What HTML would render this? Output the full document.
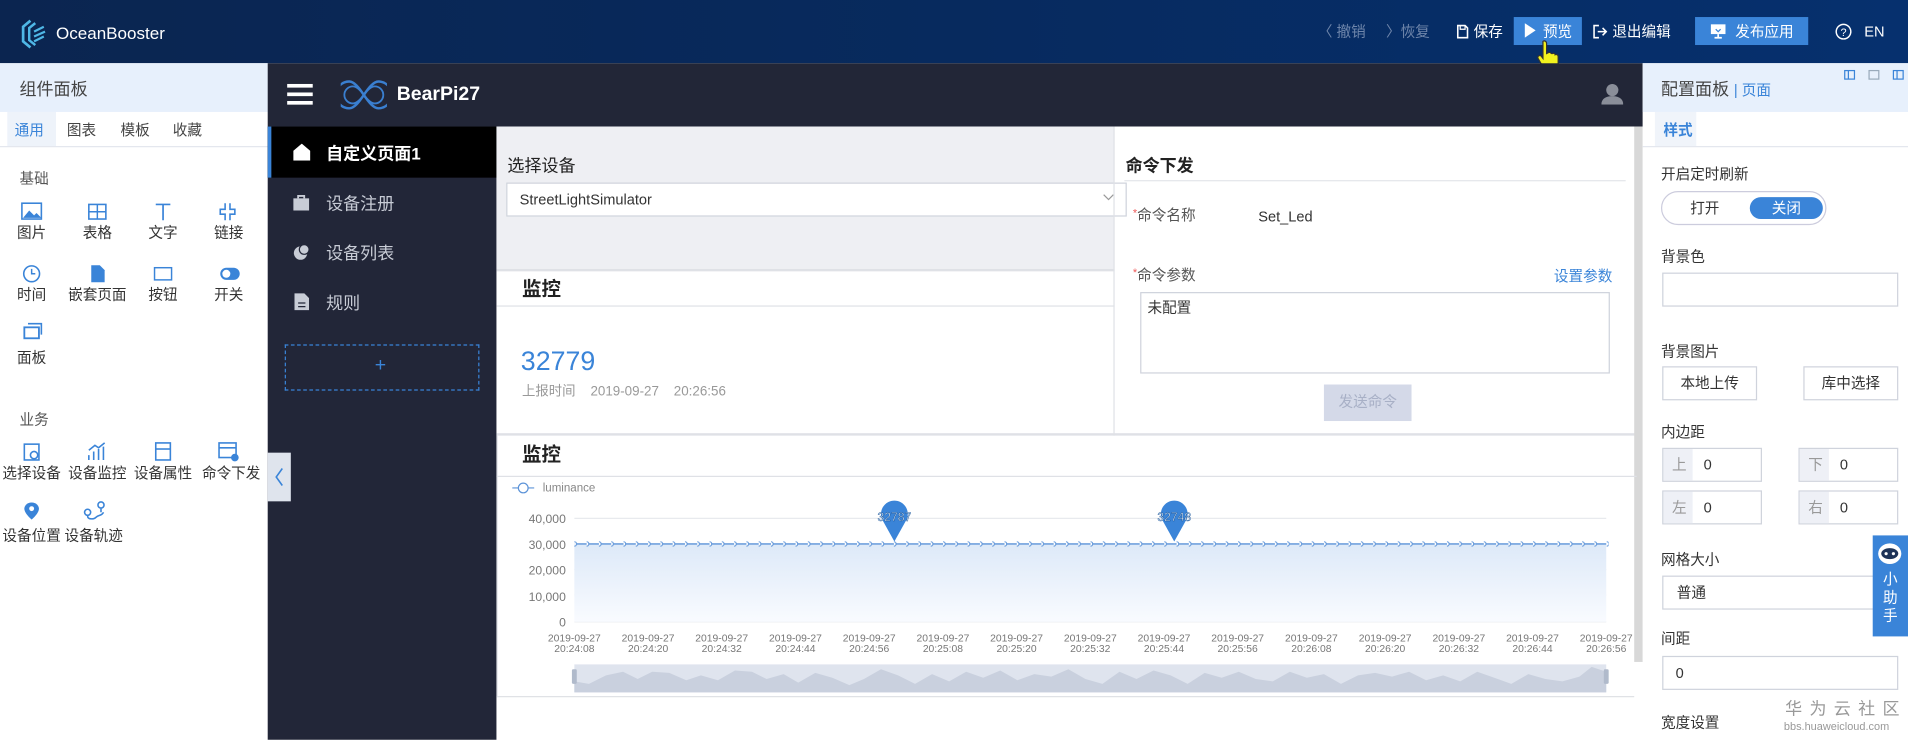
<!DOCTYPE html>
<html><head><meta charset="utf-8">
<style>
*{box-sizing:border-box;margin:0;padding:0}
html,body{width:1908px;height:740px;overflow:hidden;background:#fff}
body{font-family:"Liberation Sans","Noto Sans CJK SC",sans-serif;font-size:12px;color:#333}
#s{position:absolute;left:0;top:0;width:1568px;height:608px;transform:scale(1.21684);transform-origin:0 0;overflow:hidden}
.a{position:absolute}
.t{position:absolute;white-space:nowrap;line-height:1}
.top{left:0;top:0;width:1568px;height:52px;background:linear-gradient(90deg,#0b2550,#072a5e 50%,#06306e)}
.tw{color:#fff}
.lp{left:0;top:52px;width:220px;height:556px;background:#fff}
.ph{background:#e7f0fc;height:40px;width:100%;position:absolute;top:0;left:0}
.lab{position:absolute;font-size:12px;color:#333;text-align:center;width:60px;margin-left:-30px;line-height:1}
.nav{left:220px;top:52px;width:188px;height:556px;background:#222638}
.nt{color:#c8ccd6;font-size:14px}
.inp{position:absolute;background:#fff;border:1px solid #cfd3dc}
.rp{left:1350px;top:52px;width:218px;height:556px;background:#fff}
.rl{color:#333;font-size:12px}
</style></head><body><div id="s">

<div class="a top"></div>
<svg class="a" style="left:16px;top:15px" width="24" height="26" viewBox="0 0 24 26"><path d="M9 2 L3 7 L3 19 L9 24" fill="none" stroke="#4fb7e6" stroke-width="2.2"/><path d="M13 4 L8 8 L8 18 L13 22" fill="none" stroke="#4fb7e6" stroke-width="2"/><path d="M12 11 L20 7 M12 15 L21 11 M12 19 L20 15" stroke="#4fb7e6" stroke-width="1.8"/></svg>
<div class="t tw" style="left:46px;top:20px;font-size:14px">OceanBooster</div>
<div class="t" style="left:1083px;top:20px;color:#6f86ab;font-size:12px">〈 撤销</div>
<div class="t" style="left:1139px;top:20px;color:#6f86ab;font-size:12px">〉恢复</div>
<svg class="a" style="left:1197px;top:20px" width="10" height="12"><path d="M1 1h6l2 2v8H1z" fill="none" stroke="#fff" stroke-width="1.3"/><path d="M3 1v3h4V1" stroke="#fff" fill="none"/></svg>
<div class="t tw" style="left:1211px;top:20px">保存</div>
<div class="a" style="left:1244px;top:14px;width:56px;height:23px;background:#3a84d8"></div>
<svg class="a" style="left:1253px;top:19px" width="9" height="12"><path d="M0 0L9 6 0 12z" fill="#fff"/></svg>
<div class="t tw" style="left:1268px;top:20px">预览</div>
<svg class="a" style="left:1262px;top:32px" width="26" height="28" viewBox="0 0 26 28"><path d="M6 2c1.5-1 3 0 3 2v8l2-1c1 0 2 1 2 1l1 0c1-.5 2 0 2 1 1-.5 2.5 0 2.5 1.5V20c0 3-2 6-5 6H10c-2 0-3-1-4-3L2 16c-1-1.5 1-3 2.5-2L6 16V3z" fill="#f2f21e" stroke="#333" stroke-width="1"/></svg>
<svg class="a" style="left:1309px;top:20px" width="12" height="12"><path d="M5 1H1v10h4" fill="none" stroke="#fff" stroke-width="1.3"/><path d="M4 6h7M8 3l3 3-3 3" fill="none" stroke="#fff" stroke-width="1.3"/></svg>
<div class="t tw" style="left:1325px;top:20px">退出编辑</div>
<div class="a" style="left:1393px;top:14px;width:93px;height:23px;background:#3a84d8"></div>
<svg class="a" style="left:1405px;top:19px" width="14" height="13"><rect x="1" y="1" width="12" height="8" fill="#fff"/><path d="M7 9v3M4 12h6" stroke="#fff" stroke-width="1.4"/><path d="M5 5l2 2 2-2" stroke="#3a84d8" fill="none"/></svg>
<div class="t tw" style="left:1426px;top:20px">发布应用</div>
<svg class="a" style="left:1508px;top:19px" width="14" height="14"><circle cx="7" cy="7" r="6" fill="none" stroke="#fff" stroke-width="1.2"/><text x="7" y="10.5" font-size="9" fill="#fff" text-anchor="middle" font-family="Liberation Sans">?</text></svg>
<div class="t tw" style="left:1532px;top:20px">EN</div>

<div class="a lp">
 <div class="ph"></div>
 <div class="t" style="left:16px;top:14px;font-size:14px;color:#444">组件面板</div>
 <div class="a" style="left:6px;top:40px;width:40px;height:28px;background:#eef3fa"></div>
 <div class="t" style="left:12px;top:49px;color:#3a84d8">通用</div>
 <div class="t" style="left:55px;top:49px;color:#444">图表</div>
 <div class="t" style="left:99px;top:49px;color:#444">模板</div>
 <div class="t" style="left:142px;top:49px;color:#444">收藏</div>
 <div class="a" style="left:0;top:68px;width:220px;height:1px;background:#e4e7ee"></div>
 <div class="t" style="left:16px;top:89px;color:#555">基础</div>
 <svg class="a" style="left:0;top:0" width="220" height="400">
  <g fill="#3a84d8" stroke="#3a84d8">
   <rect x="18" y="115" width="16" height="13" fill="none" stroke-width="1.3"/><path d="M19 127l5-6 4 4 2-2 4 4z" stroke="none"/>
   <rect x="73" y="116" width="14" height="12" fill="none" stroke-width="1.3"/><path d="M73 122h14M80 116v12" stroke-width="1.2"/>
   <path d="M128 116h12M134 116v13" stroke-width="1.4" fill="none"/>
   <path d="M185 115v5h-4v4h4v5M189 115v5h4v4h-4v5" fill="none" stroke-width="1.3"/>
   <circle cx="26" cy="173" r="6.5" fill="none" stroke-width="1.3"/><path d="M26 169v4h3" fill="none" stroke-width="1.2"/>
   <path d="M75 166h7l4 4v10H75z" stroke="none"/>
   <rect x="127" y="168" width="14" height="10" fill="none" stroke-width="1.2"/>
   <rect x="181" y="168" width="16" height="10" rx="5" stroke="none"/><circle cx="186" cy="173" r="3.3" fill="#fff" stroke="none"/>
   <rect x="20" y="217" width="12" height="9" fill="none" stroke-width="1.5"/><path d="M23 214h11v9" fill="none" stroke-width="1.3"/>
  </g>
 </svg>
 <div class="lab" style="left:26px;top:133px">图片</div>
 <div class="lab" style="left:80px;top:133px">表格</div>
 <div class="lab" style="left:134px;top:133px">文字</div>
 <div class="lab" style="left:188px;top:133px">链接</div>
 <div class="lab" style="left:26px;top:184px">时间</div>
 <div class="lab" style="left:80px;top:184px">嵌套页面</div>
 <div class="lab" style="left:134px;top:184px">按钮</div>
 <div class="lab" style="left:188px;top:184px">开关</div>
 <div class="lab" style="left:26px;top:236px">面板</div>
 <div class="t" style="left:16px;top:287px;color:#555">业务</div>
 <svg class="a" style="left:0;top:0" width="220" height="400">
  <g fill="none" stroke="#3a84d8" stroke-width="1.3">
   <rect x="20" y="313" width="12" height="13"/><circle cx="28" cy="322" r="3"/>
   <path d="M73 326v-4M77 326v-7M81 326v-9M85 326v-11M73 318l5-4 3 2 5-4"/>
   <rect x="128" y="312" width="12" height="14"/><path d="M128 317h12"/>
   <rect x="180" y="312" width="14" height="12"/><path d="M180 316h14"/><circle cx="193" cy="324" r="2.5" fill="#3a84d8"/>
  </g>
  <path d="M26 361c-4 0-6 3-6 5 0 4 6 9 6 9s6-5 6-9c0-2-2-5-6-5z" fill="#3a84d8"/><circle cx="26" cy="366" r="2" fill="#fff"/>
  <g fill="none" stroke="#3a84d8" stroke-width="1.3"><circle cx="72" cy="369" r="2.5"/><circle cx="83" cy="363" r="2.5"/><path d="M72 372c0 3 5 3 7 1s5-1 6-4M83 366v3"/></g>
 </svg>
 <div class="lab" style="left:26px;top:331px">选择设备</div>
 <div class="lab" style="left:80px;top:331px">设备监控</div>
 <div class="lab" style="left:134px;top:331px">设备属性</div>
 <div class="lab" style="left:190px;top:331px">命令下发</div>
 <div class="lab" style="left:26px;top:382px">设备位置</div>
 <div class="lab" style="left:77px;top:382px">设备轨迹</div>
</div>

<div class="a" style="left:220px;top:52px;width:1130px;height:52px;background:#222637"></div>
<div class="a" style="left:236px;top:69px;width:21px;height:2.5px;background:#fff"></div>
<div class="a" style="left:236px;top:76px;width:21px;height:2.5px;background:#fff"></div>
<div class="a" style="left:236px;top:83px;width:21px;height:2.5px;background:#fff"></div>
<svg class="a" style="left:280px;top:64px" width="38" height="28" viewBox="0 0 38 28"><g fill="none" stroke="#3a7fd0" stroke-width="2"><path d="M19 14c-4-6-8-11-12-11a11 11 0 0 0 0 22c4 0 8-5 12-11s8-11 12-11a11 11 0 0 1 0 22c-4 0-8-5-12-11z"/><path d="M19 14c-3-4-6-7-9-7a7 7 0 0 0 0 14c3 0 6-3 9-7s6-7 9-7a7 7 0 0 1 0 14c-3 0-6-3-9-7z" stroke-width="1.5"/></g></svg>
<div class="t tw" style="left:326px;top:70px;font-size:16px;font-weight:bold">BearPi27</div>
<svg class="a" style="left:1316px;top:68px" width="18" height="18"><circle cx="9" cy="6" r="5" fill="#8a8e99"/><path d="M0 18c0-5 4-7 9-7s9 2 9 7z" fill="#8a8e99"/></svg>

<div class="a nav" style="top:104px;height:504px"></div>
<div class="a" style="left:220px;top:104px;width:188px;height:42px;background:#000"></div>
<div class="a" style="left:220px;top:104px;width:3px;height:42px;background:#3a84d8"></div>
<svg class="a" style="left:241px;top:118px" width="14" height="14"><path d="M7 0L14 6v8H0V6z" fill="#fff"/></svg>
<div class="t" style="left:268px;top:119px;color:#fff;font-size:14px;font-weight:bold">自定义页面1</div>
<svg class="a" style="left:241px;top:159px" width="14" height="14"><rect x="0" y="4" width="13" height="10" fill="#c8ccd6"/><path d="M4 4V2h5v2" stroke="#c8ccd6" fill="none" stroke-width="1.5"/></svg>
<div class="t nt" style="left:268px;top:160px">设备注册</div>
<svg class="a" style="left:241px;top:200px" width="14" height="14"><circle cx="6" cy="8" r="5.5" fill="#c8ccd6"/><circle cx="9" cy="5" r="4" fill="#c8ccd6" stroke="#222638"/></svg>
<div class="t nt" style="left:268px;top:201px">设备列表</div>
<svg class="a" style="left:242px;top:241px" width="12" height="14"><path d="M0 0h8l4 4v10H0z" fill="#c8ccd6"/><path d="M3 8h6M3 11h6" stroke="#222638"/></svg>
<div class="t nt" style="left:268px;top:242px">规则</div>
<div class="a" style="left:234px;top:283px;width:160px;height:38px;border:1.5px dashed #3a84d8"></div>
<div class="t" style="left:308px;top:293px;color:#3a84d8;font-size:16px">+</div>
<div class="a" style="left:220px;top:372px;width:19px;height:40px;background:#dfe4ed"></div>
<svg class="a" style="left:225px;top:384px" width="9" height="16"><path d="M7 1L2 8l5 7" fill="none" stroke="#3a84d8" stroke-width="1.3"/></svg>

<div class="a" style="left:408px;top:104px;width:942px;height:504px;background:#fff"></div>
<div class="a" style="left:408px;top:104px;width:508px;height:117px;background:#eeeff3"></div>
<div class="t" style="left:417px;top:129px;font-size:14px;color:#222">选择设备</div>
<div class="inp" style="left:416px;top:150px;width:510px;height:28px"></div>
<div class="t" style="left:427px;top:158px;font-size:12px;color:#333">StreetLightSimulator</div>
<svg class="a" style="left:906px;top:159px" width="10" height="7"><path d="M1 1l4 4 4-4" fill="none" stroke="#999"/></svg>
<div class="a" style="left:408px;top:221px;width:508px;height:2px;background:#dfe1e6"></div>
<div class="t" style="left:429px;top:231px;font-size:16px;font-weight:bold;color:#222">监控</div>
<div class="a" style="left:408px;top:251px;width:508px;height:1px;background:#dfe1e6"></div>
<div class="t" style="left:428px;top:286px;font-size:22px;color:#3a84d8">32779</div>
<div class="t" style="left:429px;top:317px;font-size:11px;color:#999">上报时间&nbsp;&nbsp;&nbsp; 2019-09-27 &nbsp;&nbsp;&nbsp;20:26:56</div>
<div class="a" style="left:915px;top:104px;width:1px;height:254px;background:#dfe1e6"></div>
<div class="a" style="left:408px;top:356px;width:937px;height:2px;background:#dfe1e6"></div>
<div class="t" style="left:925px;top:129px;font-size:14px;font-weight:bold;color:#222">命令下发</div>
<div class="a" style="left:924px;top:148px;width:412px;height:1px;background:#e4e6ea"></div>
<div class="t" style="left:931px;top:171px;font-size:12px;color:#555"><span style="color:#e55;font-size:9px;vertical-align:top">*</span>命令名称</div>
<div class="t" style="left:1034px;top:172px;font-size:12px;color:#333">Set_Led</div>
<div class="t" style="left:931px;top:220px;font-size:12px;color:#555"><span style="color:#e55;font-size:9px;vertical-align:top">*</span>命令参数</div>
<div class="t" style="left:1277px;top:221px;font-size:12px;color:#3a84d8">设置参数</div>
<div class="inp" style="left:937px;top:240px;width:386px;height:67px"></div>
<div class="t" style="left:943px;top:247px;font-size:12px;color:#333">未配置</div>
<div class="a" style="left:1088px;top:316px;width:72px;height:30px;background:#d4d9e8"></div>
<div class="t" style="left:1100px;top:324px;font-size:12px;color:#a8b0c6">发送命令</div>
<div class="a" style="left:1343px;top:104px;width:7px;height:440px;background:#d8d8d8"></div>

<div class="t" style="left:429px;top:367px;font-size:16px;font-weight:bold;color:#222">监控</div>
<div class="a" style="left:408px;top:391px;width:937px;height:1px;background:#dfe1e6"></div>
<div class="a" style="left:408px;top:572px;width:937px;height:1px;background:#dfe1e6"></div>
<div class="a" style="left:408px;top:358px;width:1px;height:215px;background:#dfe1e6"></div>
<svg class="a" style="left:408px;top:392px" width="937" height="180" font-family="Liberation Sans" >
 <defs>
  <linearGradient id="g" x1="0" y1="0" x2="0" y2="1"><stop offset="0" stop-color="#dde9f8"/><stop offset="1" stop-color="#f9fbff"/></linearGradient>
  <pattern id="d" x="64" y="0" width="10.1" height="180" patternUnits="userSpaceOnUse"><circle cx="0" cy="55" r="1.8" fill="#fff" stroke="#5c93d8" stroke-width="0.9"/></pattern>
 </defs>
 <path d="M13 9h18" stroke="#5c93d8"/><circle cx="22" cy="9" r="4" fill="#fff" stroke="#5c93d8"/>
 <text x="38" y="12" font-size="9.5" fill="#888">luminance</text>
 <g fill="#777" font-size="10" text-anchor="end">
  <text x="57" y="38">40,000</text><text x="57" y="59">30,000</text><text x="57" y="80">20,000</text><text x="57" y="102">10,000</text><text x="57" y="123">0</text>
 </g>
 <g stroke="#e8eaee"><path d="M64 34h848M64 76h848M64 97h848M64 119h848"/></g>
 <rect x="64" y="55" width="848" height="64" fill="url(#g)"/>
 <path d="M64 55h848" stroke="#5c93d8" stroke-width="1.2"/>
 <rect x="62" y="50" width="852" height="10" fill="url(#d)"/>
 <g fill="#3a84d8"><path d="M327 53l-10-18a11 11 0 1 1 20 0z"/><path d="M557 53l-10-18a11 11 0 1 1 20 0z"/></g>
 <g fill="#fff" font-size="10" text-anchor="middle" stroke="#1e5a9e" stroke-width="0.4"><text x="327" y="36">32787</text><text x="557" y="36">32748</text></g>
 <g fill="#777" font-size="8.5" text-anchor="middle">
  <text x="64" y="135">2019-09-27</text><text x="64" y="144">20:24:08</text>
  <text x="124.6" y="135">2019-09-27</text><text x="124.6" y="144">20:24:20</text>
  <text x="185.1" y="135">2019-09-27</text><text x="185.1" y="144">20:24:32</text>
  <text x="245.7" y="135">2019-09-27</text><text x="245.7" y="144">20:24:44</text>
  <text x="306.3" y="135">2019-09-27</text><text x="306.3" y="144">20:24:56</text>
  <text x="366.9" y="135">2019-09-27</text><text x="366.9" y="144">20:25:08</text>
  <text x="427.4" y="135">2019-09-27</text><text x="427.4" y="144">20:25:20</text>
  <text x="488" y="135">2019-09-27</text><text x="488" y="144">20:25:32</text>
  <text x="548.6" y="135">2019-09-27</text><text x="548.6" y="144">20:25:44</text>
  <text x="609.1" y="135">2019-09-27</text><text x="609.1" y="144">20:25:56</text>
  <text x="669.7" y="135">2019-09-27</text><text x="669.7" y="144">20:26:08</text>
  <text x="730.3" y="135">2019-09-27</text><text x="730.3" y="144">20:26:20</text>
  <text x="790.9" y="135">2019-09-27</text><text x="790.9" y="144">20:26:32</text>
  <text x="851.4" y="135">2019-09-27</text><text x="851.4" y="144">20:26:44</text>
  <text x="912" y="135">2019-09-27</text><text x="912" y="144">20:26:56</text>
 </g>
 <rect x="64" y="154" width="848" height="23" fill="#dfe4ee"/>
 <polygon points="64,177 64,168 76,170 90,163 104,160 116,166 128,160 142,161 156,167 168,163 182,167 196,159 210,160 222,166 236,162 248,169 262,161 276,165 290,171 302,166 316,158 330,163 344,170 358,162 372,168 386,160 400,165 414,159 428,167 442,162 456,164 470,158 484,166 498,170 512,160 526,166 540,159 554,163 568,170 582,161 596,165 610,160 624,166 638,168 652,160 666,165 680,162 694,170 708,163 722,161 736,164 750,160 764,167 778,163 792,168 806,160 820,165 834,170 848,162 862,166 876,168 890,164 900,156 912,160 912,177" fill="#c9d0de"/>
 <rect x="62" y="158" width="4" height="12" rx="1" fill="#b0bacb"/><rect x="910" y="158" width="4" height="12" rx="1" fill="#b0bacb"/>
</svg>

<div class="a rp">
 <div class="ph"></div>
 <div class="t" style="left:15px;top:14px;font-size:14px;color:#444">配置面板 <span style="color:#3a84d8;font-size:12px">| 页面</span></div>
 <svg class="a" style="left:165px;top:5px" width="50" height="10"><g fill="none" stroke="#3a84d8"><rect x="1" y="1" width="8" height="7"/><path d="M4 1v7"/><rect x="21" y="1" width="8" height="7" stroke="#9ab"/><rect x="41" y="1" width="8" height="7"/><path d="M44 1v7"/></g></svg>
 <div class="a" style="left:10px;top:40px;width:34px;height:28px;background:#f0f4fa"></div>
 <div class="t" style="left:17px;top:49px;color:#3a84d8;font-weight:bold">样式</div>
 <div class="a" style="left:0;top:68px;width:218px;height:1px;background:#e4e7ee"></div>
 <div class="t rl" style="left:15px;top:85px">开启定时刷新</div>
 <div class="a" style="left:15px;top:105px;width:136px;height:28px;border:1px solid #ccd;border-radius:14px"></div>
 <div class="a" style="left:88px;top:110px;width:60px;height:18px;background:#3a84d8;border-radius:9px"></div>
 <div class="t" style="left:39px;top:113px;color:#333">打开</div>
 <div class="t" style="left:106px;top:113px;color:#fff">关闭</div>
 <div class="t rl" style="left:15px;top:153px">背景色</div>
 <div class="inp" style="left:16px;top:172px;width:194px;height:28px"></div>
 <div class="t rl" style="left:15px;top:231px">背景图片</div>
 <div class="inp" style="left:16px;top:249px;width:78px;height:28px"></div>
 <div class="t rl" style="left:31px;top:257px">本地上传</div>
 <div class="inp" style="left:132px;top:249px;width:78px;height:28px"></div>
 <div class="t rl" style="left:147px;top:257px">库中选择</div>
 <div class="t rl" style="left:15px;top:297px">内边距</div>
 <div class="inp" style="left:16px;top:316px;width:82px;height:28px"></div><div class="a" style="left:17px;top:317px;width:24px;height:26px;background:#eef0f6"></div>
 <div class="t" style="left:24px;top:324px;color:#999">上</div><div class="t" style="left:50px;top:324px">0</div>
 <div class="inp" style="left:128px;top:316px;width:82px;height:28px"></div><div class="a" style="left:129px;top:317px;width:24px;height:26px;background:#eef0f6"></div>
 <div class="t" style="left:136px;top:324px;color:#999">下</div><div class="t" style="left:162px;top:324px">0</div>
 <div class="inp" style="left:16px;top:351px;width:82px;height:28px"></div><div class="a" style="left:17px;top:352px;width:24px;height:26px;background:#eef0f6"></div>
 <div class="t" style="left:24px;top:359px;color:#999">左</div><div class="t" style="left:50px;top:359px">0</div>
 <div class="inp" style="left:128px;top:351px;width:82px;height:28px"></div><div class="a" style="left:129px;top:352px;width:24px;height:26px;background:#eef0f6"></div>
 <div class="t" style="left:136px;top:359px;color:#999">右</div><div class="t" style="left:162px;top:359px">0</div>
 <div class="t rl" style="left:15px;top:402px">网格大小</div>
 <div class="inp" style="left:16px;top:421px;width:194px;height:28px"></div>
 <div class="t rl" style="left:28px;top:429px">普通</div>
 <div class="t rl" style="left:15px;top:467px">间距</div>
 <div class="inp" style="left:16px;top:487px;width:194px;height:28px"></div>
 <div class="t rl" style="left:27px;top:495px">0</div>
 <div class="t rl" style="left:15px;top:536px">宽度设置</div>
 <div class="t" style="left:117px;top:523px;font-size:14px;color:#999;letter-spacing:6px">华为云社区</div>
 <div class="t" style="left:116px;top:541px;font-size:9px;color:#999">bbs.huaweicloud.com</div>
</div>
<div class="a" style="left:1343px;top:544px;width:7px;height:64px;background:#fff"></div>
<div class="a" style="left:1539px;top:440px;width:29px;height:83px;background:#3a84d8"></div>
<svg class="a" style="left:1543px;top:446px" width="20" height="18"><ellipse cx="10" cy="9" rx="9.5" ry="8.5" fill="#fff"/><ellipse cx="10" cy="9" rx="7" ry="4.5" fill="#1d3358"/><circle cx="7" cy="9" r="1.3" fill="#fff"/><circle cx="13" cy="9" r="1.3" fill="#fff"/></svg>
<div class="a" style="left:1539px;top:469px;width:29px;color:#fff;font-size:12px;text-align:center;line-height:15px">小<br>助<br>手</div>
</div></body></html>
